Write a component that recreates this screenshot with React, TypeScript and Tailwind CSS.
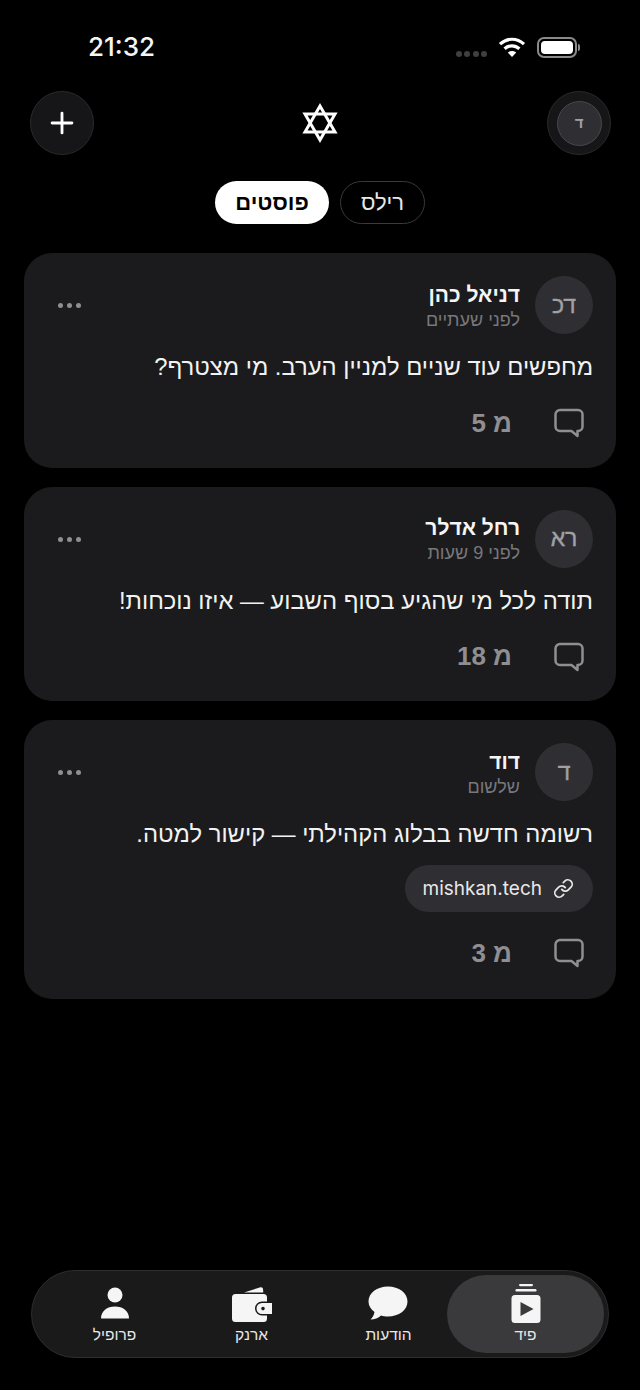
import { Link, Plus } from "lucide-react";

const font = "font-['Liberation_Sans','Noto_Sans',sans-serif]";

function Star() {
  return (
    <svg width="38" height="40" viewBox="0 0 38 40" fill="none" stroke="white" strokeWidth="3" strokeLinejoin="miter" className="mr-[1px]">
      <path d="M19 3 L34 29 L4 29 Z" />
      <path d="M19 37 L34 11 L4 11 Z" />
    </svg>
  );
}

function Bubble() {
  return (
    <svg width="30" height="30" viewBox="0 0 30 30" fill="none" stroke="#8e8e93" strokeWidth="2.5" strokeLinejoin="round">
      <path d="M6 2 H24 A4.5 4.5 0 0 1 28.5 6.5 V18.5 A4.5 4.5 0 0 1 24 23 H23.5 V28 L17.5 23 H6 A4.5 4.5 0 0 1 1.5 18.5 V6.5 A4.5 4.5 0 0 1 6 2 Z" />
    </svg>
  );
}

function Post({ initials, name, time, text, count, link }: { initials: string; name: string; time: string; text: string; count: string; link?: boolean }) {
  return (
    <div className={`rounded-[28px] bg-[#1b1b1d] pt-[23px] pl-[34px] pr-[23px] ${link ? "pb-[31px]" : "pb-[29.5px]"}`}>
      <div className="flex items-center gap-[15px]">
        <div className="w-[58px] h-[58px] rounded-full bg-[#2f2f33] flex items-center justify-center text-[23px] text-[#a0a0a5] [-webkit-text-stroke:0.4px_#a0a0a5]">{initials}</div>
        <div className="flex-1 mt-[2px]">
          <div className="text-[21px] leading-[26px] font-bold text-[#f5f5f5]">{name}</div>
          <div className="mt-[2px] text-[18px] leading-[21px] text-[#77777c]">{time}</div>
        </div>
        <div className="flex gap-[4px] mt-[1px]">
          <span className="w-[5px] h-[5px] rounded-full bg-[#8e8e93]" />
          <span className="w-[5px] h-[5px] rounded-full bg-[#8e8e93]" />
          <span className="w-[5px] h-[5px] rounded-full bg-[#8e8e93]" />
        </div>
      </div>
      <div className="mt-[17px] text-[23.8px] leading-[32px] text-[#f2f2f2]">{text}</div>
      {link && (
        <div className="mt-[15px] flex">
          <div className="h-[47px] pr-[19px] pl-[17px] rounded-full bg-[#2e2e33] flex items-center gap-[11px]">
            <Link size={21} color="#e8e8e8" strokeWidth={2} />
            <span dir="ltr" className="pt-[1px] font-['Inter',sans-serif] text-[19px] text-[#e8e8e8]">mishkan.tech</span>
          </div>
        </div>
      )}
      <div className={`mr-[9px] flex items-center gap-[42px] h-[30px] ${link ? "mt-[26px]" : "mt-[25px]"}`}>
        <Bubble />
        <span className="text-[26px] font-bold text-[#8e8e93]">{count}</span>
      </div>
    </div>
  );
}

function NavItem({ label, active, children }: { label: string; active?: boolean; children: React.ReactNode }) {
  return (
    <div className={`flex flex-col items-center rounded-full h-[78px] pt-[11px] ${active ? "w-[157px] -ml-[10px] bg-[#3a3a3c] order-first" : "w-[137px]"}`}>
      <div className="h-[36px] flex items-end justify-center">{children}</div>
      <div className="mt-[3px] text-[15.5px] leading-[20px] text-[#e8e8e8]">{label}</div>
    </div>
  );
}

export default function App() {
  return (
    <div dir="rtl" className={`w-[640px] h-[1390px] bg-black flex flex-col ${font}`}>
      <div dir="ltr" className="h-[91px] flex justify-between pt-[31px] pl-[88px] pr-[60px]">
        <span className="font-['Inter',sans-serif] text-[26px] leading-[32px] font-medium text-[#f5f5f5]">21:32</span>
        <div className="flex items-center h-[32px]">
          <div className="flex gap-[2.5px] mt-[14px] mr-[11px]">
            {[0, 1, 2, 3].map((i) => <span key={i} className="w-[6px] h-[6px] rounded-full bg-[#3f3f3f]" />)}
          </div>
          <svg width="28" height="22" viewBox="0 0 28 22" className="mb-[1px]" fill="none" stroke="white" strokeWidth="3.2">
            <path d="M2 8.2 C9 1.6 19 1.6 26 8.2" />
            <path d="M6.6 12.8 C11 8.8 17 8.8 21.4 12.8" />
            <path d="M14 21 L9.8 16.6 C12.2 14.6 15.8 14.6 18.2 16.6 Z" fill="white" stroke="none" />
          </svg>
          <div className="ml-[11px] w-[40px] h-[21px] rounded-[7px] border-2 border-[#8a8a8a] p-[2px]">
            <div className="w-full h-full rounded-[4px] bg-white" />
          </div>
          <div className="ml-[1px] w-[2px] h-[7px] rounded-r bg-[#8a8a8a]" />
        </div>
      </div>

      <div dir="ltr" className="h-[64px] pl-[30px] pr-[29px] flex items-center justify-between">
        <div className="w-[64px] h-[64px] rounded-full bg-[#161618] border border-[#2a2a2c] flex items-center justify-center">
          <Plus size={34} color="white" strokeWidth={2} />
        </div>
        <Star />
        <div className="w-[64px] h-[64px] rounded-full bg-[#161618] border border-[#2a2a2c] flex items-center justify-center">
          <div dir="rtl" className="w-[45px] h-[45px] rounded-full bg-[#2f2f33] border border-[#48484a] flex items-center justify-center text-[15px] font-bold text-[#a0a0a5]">ד</div>
        </div>
      </div>

      <div className="mt-[26px] flex justify-center gap-[11px]">
        <div className="w-[85px] h-[43px] rounded-full border border-[#3a3a3c] flex items-center justify-center text-[22px] text-[#e8e8e8]">רילס</div>
        <div className="w-[114px] h-[43px] rounded-full bg-white flex items-center justify-center text-[22px] font-bold text-black">פוסטים</div>
      </div>

      <div className="mt-[29px] mx-[24px] flex flex-col gap-[19px]">
        <Post initials="דכ" name="דניאל כהן" time="לפני שעתיים" text="מחפשים עוד שניים למניין הערב. מי מצטרף?" count="מ 5" />
        <Post initials="רא" name="רחל אדלר" time="לפני 9 שעות" text="תודה לכל מי שהגיע בסוף השבוע — איזו נוכחות!" count="מ 18" />
        <Post initials="ד" name="דוד" time="שלשום" text="רשומה חדשה בבלוג הקהילתי — קישור למטה." count="מ 3" link />
      </div>

      <div className="mt-auto mb-[32px] mx-[31px] h-[88px] rounded-full bg-[#1a1a1a] border border-[#2e2e2e] flex items-center pr-[4px]">
        <NavItem label="פיד" active>
          <svg width="30" height="39" viewBox="0 0 30 39" fill="#f5f5f5" className="-mb-[1px]">
            <rect x="8" y="0" width="14" height="2.2" rx="1.1" />
            <rect x="4.5" y="5" width="21" height="2.4" rx="1.2" />
            <path d="M4 11 H26 A3.5 3.5 0 0 1 29.5 14.5 V35.5 A3.5 3.5 0 0 1 26 39 H4 A3.5 3.5 0 0 1 0.5 35.5 V14.5 A3.5 3.5 0 0 1 4 11 Z M9.5 18 V32 L22.5 25 Z" fillRule="evenodd" />
          </svg>
        </NavItem>
        <NavItem label="הודעות">
          <svg width="40" height="34" viewBox="0 0 40 34" fill="#f5f5f5" className="mb-[2px] mr-[1px]">
            <path d="M20 0.5 C31 0.5 39.5 7 39.5 15.5 C39.5 24 31 30.5 20 30.5 C17.5 30.5 15 30.1 13 29.5 C10.5 32 6.5 33.5 2.5 33.5 C4.5 31.5 6 29 6.5 26 C2.8 23.3 0.5 19.5 0.5 15.5 C0.5 7 9 0.5 20 0.5 Z" />
          </svg>
        </NavItem>
        <NavItem label="ארנק">
          <svg width="40" height="35" viewBox="0 0 40 35" fill="#f5f5f5">
            <path d="M12 5.5 L28.5 0.3 C30 0 30.8 0.8 31 2 L31.3 5.5 Z" />
            <path d="M3.5 7 H31.5 A3.5 3.5 0 0 1 35 10.5 V14.5 H30 A6.5 6.5 0 0 0 30 28.5 H35 V31.5 A3.5 3.5 0 0 1 31.5 35 H3.5 A3.5 3.5 0 0 1 0 31.5 V10.5 A3.5 3.5 0 0 1 3.5 7 Z" />
            <path d="M30 16 H40 V27 H30 A5.5 5.5 0 0 1 30 16 Z M31 19.8 A1.8 1.8 0 1 0 31 23.4 A1.8 1.8 0 1 0 31 19.8 Z" fillRule="evenodd" />
          </svg>
        </NavItem>
        <NavItem label="פרופיל">
          <svg width="30" height="32" viewBox="0 0 30 32" fill="#f5f5f5" className="mb-[3px]">
            <circle cx="15" cy="8" r="7.5" />
            <path d="M1 31.5 C1 24 7 19.5 15 19.5 C23 19.5 29 24 29 31.5 Z" />
          </svg>
        </NavItem>
      </div>
    </div>
  );
}
